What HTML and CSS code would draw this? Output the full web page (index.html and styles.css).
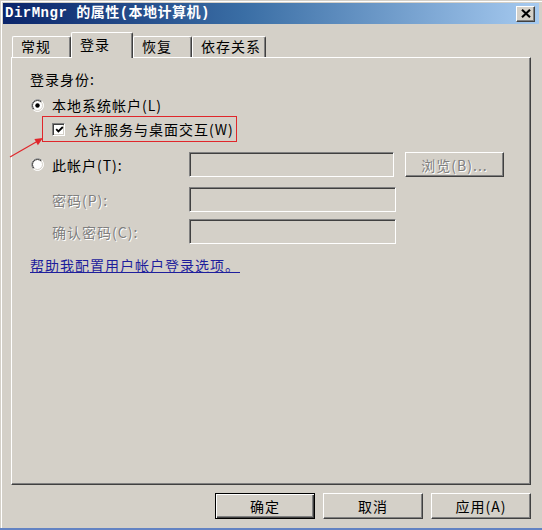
FILE: index.html
```html
<!DOCTYPE html>
<html>
<head>
<meta charset="utf-8">
<title>DirMngr 的属性</title>
<link rel="stylesheet" href="styles.css">
</head>
<body>
<div class="window">
  <div class="titlebar">
    <span class="title">DirMngr 的属性(本地计算机)</span>
    <div class="close">
      <svg width="10" height="9" viewBox="0 0 10 9"><path d="M1 0.8 L9 8.2 M9 0.8 L1 8.2" stroke="#000" stroke-width="2.1" fill="none"/></svg>
    </div>
  </div>
  <div class="body">
    <div class="tabs">
      <div class="tab w59">常规</div>
      <div class="tab active">登录</div>
      <div class="tab w59">恢复</div>
      <div class="tab w74">依存关系</div>
    </div>
    <div class="panel">
      <div class="row">登录身份:</div>
      <div class="row gap8">
        <svg class="radio" width="13" height="13" viewBox="0 0 13 13">
          <circle cx="6.5" cy="6.5" r="6" fill="#fff" stroke="#fff" stroke-width="1"/>
          <path d="M2.26 10.74 A6 6 0 0 1 10.74 2.26" stroke="#808080" stroke-width="1" fill="none"/>
          <circle cx="6.5" cy="6.5" r="5" fill="#fff" stroke="#d4d0c8" stroke-width="1"/>
          <path d="M2.96 10.04 A5 5 0 0 1 10.04 2.96" stroke="#404040" stroke-width="1" fill="none"/>
          <circle cx="6.5" cy="6.5" r="2.2" fill="#000"/>
        </svg>
        <span>本地系统帐户(L)</span>
      </div>
      <div class="check-row">
        <span class="checkbox"><svg width="9" height="9" viewBox="0 0 9 9"><path d="M1.2 4.2 L3.4 6.4 L7.8 2" stroke="#000" stroke-width="1.8" fill="none"/></svg></span>
        <span>允许服务与桌面交互(W)</span>
      </div>
      <div class="field-row gap10">
        <div class="label-col">
          <svg class="radio" width="13" height="13" viewBox="0 0 13 13">
            <circle cx="6.5" cy="6.5" r="6" fill="#fff" stroke="#fff" stroke-width="1"/>
            <path d="M2.26 10.74 A6 6 0 0 1 10.74 2.26" stroke="#808080" stroke-width="1" fill="none"/>
            <circle cx="6.5" cy="6.5" r="5" fill="#fff" stroke="#d4d0c8" stroke-width="1"/>
            <path d="M2.96 10.04 A5 5 0 0 1 10.04 2.96" stroke="#404040" stroke-width="1" fill="none"/>
          </svg>
          <span>此帐户(T):</span>
        </div>
        <div class="input w205"></div>
        <div class="btn browse disabled">浏览(B)...</div>
      </div>
      <div class="field-row gap10">
        <div class="label-col indent disabled">密码(P):</div>
        <div class="input w207"></div>
      </div>
      <div class="field-row gap7">
        <div class="label-col indent disabled">确认密码(C):</div>
        <div class="input w207"></div>
      </div>
      <a class="link" href="#">帮助我配置用户帐户登录选项。</a>
    </div>
    <div class="actions">
      <div class="btn action default">确定</div>
      <div class="btn action">取消</div>
      <div class="btn action">应用(A)</div>
    </div>
  </div>
  <svg class="arrow" width="60" height="170" viewBox="0 0 60 170">
    <line x1="10" y1="157" x2="37" y2="141.5" stroke="#e0262b" stroke-width="1.2"/>
    <polygon points="43,138 37.9,145.2 34.4,139" fill="#e0262b"/>
  </svg>
</div>
</body>
</html>
```

FILE: styles.css
```css
html, body {
  margin: 0;
  padding: 0;
}

body {
  background: #6383c3;
  font-family: "Noto Sans CJK SC", "Noto Sans", sans-serif;
  font-size: 14px;
  letter-spacing: 1px;
  color: #000;
}

.window {
  width: 542px;
  height: 528px;
  box-sizing: border-box;
  background: #d4d0c8;
  padding: 3px 3px 0 3px;
  box-shadow: inset 1px 1px 0 #d4d0c8, inset 2px 2px 0 #ffffff;
  position: relative;
  display: flex;
  flex-direction: column;
}

.titlebar {
  height: 21px;
  display: flex;
  align-items: center;
  justify-content: space-between;
  background: linear-gradient(to right, #0a246a 0%, #3a6ea5 45%, #a6caf0 100%);
  padding: 0 4px 0 2px;
}

.title {
  color: #fff;
  font-family: "Liberation Mono", "Noto Sans CJK SC", monospace;
  font-weight: bold;
  font-size: 14px;
  letter-spacing: 0.5px;
  line-height: 21px;
  white-space: nowrap;
}

.close {
  width: 19px;
  height: 16px;
  box-sizing: border-box;
  background: #d4d0c8;
  border: 1px solid;
  border-color: #fff #404040 #404040 #fff;
  box-shadow: inset -1px -1px 0 #808080;
  display: flex;
  align-items: center;
  justify-content: center;
}

.body {
  padding: 0 8px;
  display: flex;
  flex-direction: column;
}

.tabs {
  display: flex;
  align-items: flex-end;
  margin-top: 8px;
  padding-left: 1px;
  height: 25px;
  position: relative;
  z-index: 1;
}

.tab {
  height: 21px;
  box-sizing: border-box;
  border-top: 1px solid #fff;
  border-left: 1px solid #fff;
  border-right: 1px solid #404040;
  box-shadow: inset -1px 0 0 #808080;
  border-radius: 2px 2px 0 0;
  padding-left: 8px;
  line-height: 19px;
  background: #d4d0c8;
  white-space: nowrap;
}

.tab.w59 { width: 59px; }
.tab.w74 { width: 74px; }

.tab.active {
  width: 62px;
  height: 26px;
  margin-bottom: -1px;
  padding-top: 2px;
}

.panel {
  height: 428px;
  box-sizing: border-box;
  border: 1px solid;
  border-color: #fff #404040 #404040 #fff;
  box-shadow: inset -1px -1px 0 #808080;
  padding: 12px 0 0 18px;
  display: flex;
  flex-direction: column;
  align-items: flex-start;
}

.row {
  display: flex;
  align-items: center;
  height: 18px;
  line-height: 18px;
  white-space: nowrap;
}

.gap8 { margin-top: 8px; }
.gap10 { margin-top: 10px; }
.gap7 { margin-top: 7px; }

.radio {
  display: block;
  margin-left: 1px;
  margin-right: 8px;
  flex: none;
}

.check-row {
  display: flex;
  align-items: center;
  width: 195px;
  height: 26px;
  box-sizing: border-box;
  border: 1px solid #e0262b;
  margin: 2px 0 0 12px;
  padding-left: 9px;
  white-space: nowrap;
  line-height: 18px;
}

.checkbox {
  width: 13px;
  height: 13px;
  box-sizing: border-box;
  background: #fff;
  border: 1px solid;
  border-color: #808080 #ffffff #ffffff #808080;
  box-shadow: inset 1px 1px 0 #404040, inset -1px -1px 0 #d4d0c8;
  display: flex;
  align-items: center;
  justify-content: center;
  margin-right: 9px;
  flex: none;
}

.checkbox svg {
  margin: 1px 0 0 1px;
}

.field-row {
  display: flex;
  align-items: center;
  height: 25px;
  line-height: 18px;
  white-space: nowrap;
}

.label-col {
  width: 159px;
  display: flex;
  align-items: center;
  flex: none;
}

.label-col.indent {
  box-sizing: border-box;
  padding-left: 22px;
}

.disabled {
  color: #808080;
  text-shadow: 1px 1px 0 #fff;
}

.input {
  height: 25px;
  box-sizing: border-box;
  border: 1px solid;
  border-color: #808080 #ffffff #ffffff #808080;
  box-shadow: inset 1px 1px 0 #404040, inset -1px -1px 0 #d4d0c8;
  background: #d4d0c8;
  flex: none;
}

.input.w205 { width: 205px; }
.input.w207 { width: 207px; }

.btn {
  box-sizing: border-box;
  border: 1px solid;
  border-color: #fff #404040 #404040 #fff;
  box-shadow: inset -1px -1px 0 #808080;
  display: flex;
  align-items: center;
  justify-content: center;
  background: #d4d0c8;
  white-space: nowrap;
  line-height: 18px;
}

.browse {
  margin-left: 11px;
  width: 99px;
  height: 25px;
}

.link {
  margin-top: 12px;
  color: #1e1e9c;
  text-decoration: underline;
  line-height: 18px;
  white-space: nowrap;
}

.actions {
  display: flex;
  justify-content: flex-end;
  gap: 8px;
  margin-top: 8px;
}

.btn.action {
  width: 100px;
  height: 26px;
}

.btn.default {
  border-color: #000;
  box-shadow: inset 1px 1px 0 #fff, inset -1px -1px 0 #404040, inset -2px -2px 0 #808080;
}

.arrow {
  position: absolute;
  left: 0;
  top: 0;
  pointer-events: none;
}
```
